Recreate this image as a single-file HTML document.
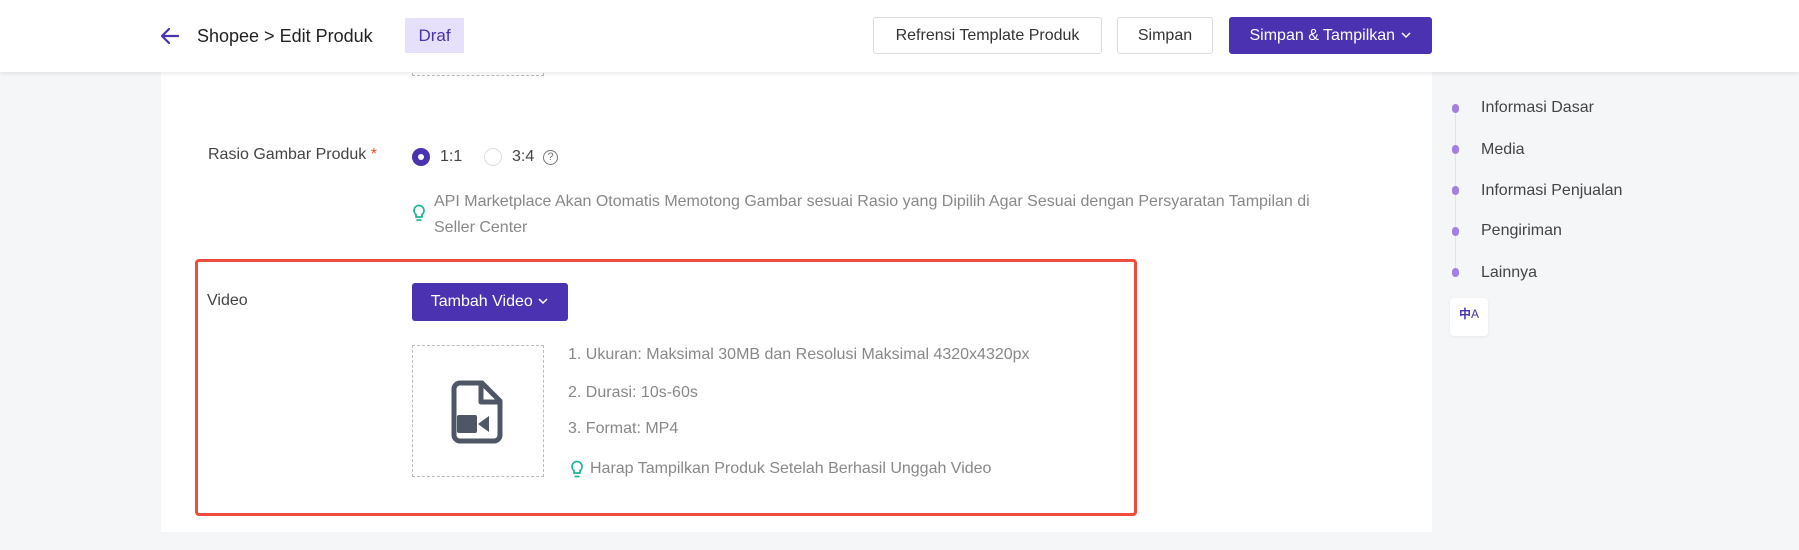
<!DOCTYPE html>
<html><head><meta charset="utf-8"><style>
*{margin:0;padding:0;box-sizing:border-box}
body{width:1799px;height:550px;overflow:hidden;background:#f5f6f8;font-family:"Liberation Sans","Noto Sans CJK SC",sans-serif;color:#333;position:relative}
.abs{position:absolute}
.hdr{left:0;top:0;width:1799px;height:72px;background:#fff;box-shadow:0 2px 4px rgba(0,0,0,.08);z-index:5}
.btn{position:absolute;top:17px;height:37px;border:1px solid #dcdde0;border-radius:3px;background:#fff;font-size:16px;line-height:35px;text-align:center;color:#333}
.card{left:161px;top:72px;width:1271px;height:460px;background:#fff}
.t{position:absolute;font-size:16px;white-space:nowrap;line-height:20px}
.g{color:#888}
.dot{position:absolute;left:1452px;width:7px;height:9px;border-radius:4px;background:#a47fe0}
.side{position:absolute;left:1481px;font-size:16px;color:#444;line-height:20px}
</style></head><body>
<div class="abs hdr">
  <svg class="abs" style="left:160px;top:27px" width="20" height="18" viewBox="0 0 20 18"><path d="M18 9H3M9 2L2 9l7 7" fill="none" stroke="#4a32b0" stroke-width="2.2" stroke-linecap="round" stroke-linejoin="round"/></svg>
  <div class="t" style="left:197px;top:26px;font-size:18px;color:#222">Shopee &gt; Edit Produk</div>
  <div class="abs" style="left:405px;top:18px;width:59px;height:35px;background:#e6e0fb;color:#4a32b0;font-size:17px;line-height:35px;text-align:center">Draf</div>
  <div class="btn" style="left:873px;width:229px">Refrensi Template Produk</div>
  <div class="btn" style="left:1117px;width:96px">Simpan</div>
  <div class="btn" style="left:1229px;width:203px;background:#4a32b0;border-color:#4a32b0;color:#fff">Simpan &amp; Tampilkan <svg width="12" height="8" viewBox="0 0 12 8" style="vertical-align:1px"><path d="M2 2l4 4 4-4" fill="none" stroke="#fff" stroke-width="1.5"/></svg></div>
</div>
<div class="abs card"></div>
<div class="abs" style="left:412px;top:60px;width:132px;height:16px;border:1px dashed #bbb;border-top:none"></div>
<div class="t" style="left:208px;top:145px;color:#444">Rasio Gambar Produk <span style="color:#ee4d2d">*</span></div>
<div class="abs" style="left:412px;top:148px;width:18px;height:18px;border-radius:50%;background:#4a32b0"></div>
<div class="abs" style="left:418px;top:154px;width:6px;height:6px;border-radius:50%;background:#fff"></div>
<div class="t" style="left:440px;top:147px;color:#444">1:1</div>
<div class="abs" style="left:484px;top:148px;width:18px;height:18px;border-radius:50%;border:1px solid #ddd"></div>
<div class="t" style="left:512px;top:147px;color:#444">3:4</div>
<div class="abs" style="left:543px;top:150px;width:15px;height:15px;border-radius:50%;border:1.3px solid #777;font-size:11px;line-height:13px;text-align:center;color:#777">?</div>
<svg class="abs" style="left:412px;top:204px" width="14" height="18" viewBox="0 0 14 18"><path d="M7 1.5a5 5 0 0 0-3 9v2.5h6v-2.5a5 5 0 0 0-3-9z" fill="none" stroke="#1bb394" stroke-width="1.7"/><path d="M4.5 16h5" stroke="#1bb394" stroke-width="1.7"/></svg>
<div class="t g" style="left:434px;top:192px">API Marketplace Akan Otomatis Memotong Gambar sesuai Rasio yang Dipilih Agar Sesuai dengan Persyaratan Tampilan di</div>
<div class="t g" style="left:434px;top:218px">Seller Center</div>
<div class="abs" style="left:195px;top:259px;width:942px;height:257px;border:3px solid #ee4d3d;border-radius:4px"></div>
<div class="t" style="left:207px;top:291px;color:#444">Video</div>
<div class="abs" style="left:412px;top:283px;width:156px;height:38px;background:#4a32b0;border-radius:3px;color:#fff;font-size:16px;line-height:38px;text-align:center">Tambah Video <svg width="12" height="8" viewBox="0 0 12 8" style="vertical-align:1px"><path d="M2 2l4 4 4-4" fill="none" stroke="#fff" stroke-width="1.5"/></svg></div>
<div class="abs" style="left:412px;top:345px;width:132px;height:132px;border:1px dashed #bbb"></div>
<svg class="abs" style="left:451px;top:380px" width="52" height="64" viewBox="0 0 52 64"><path d="M10 3h21l18 18v34a6 6 0 0 1-6 6H9a6 6 0 0 1-6-6V9a6 6 0 0 1 6-6z" fill="none" stroke="#4f5766" stroke-width="5" stroke-linejoin="round"/><path d="M30 3v19h19" fill="none" stroke="#4f5766" stroke-width="5" stroke-linejoin="round"/><rect x="6" y="35" width="20" height="18" rx="2" fill="#4f5766"/><path d="M27 44l11-8v16z" fill="#4f5766"/></svg>
<div class="t g" style="left:568px;top:345px">1. Ukuran: Maksimal 30MB dan Resolusi Maksimal 4320x4320px</div>
<div class="t g" style="left:568px;top:383px">2. Durasi: 10s-60s</div>
<div class="t g" style="left:568px;top:419px">3. Format: MP4</div>
<svg class="abs" style="left:570px;top:460px" width="14" height="19" viewBox="0 0 14 19"><path d="M7 1.5a5 5 0 0 0-3 9v2.5h6v-2.5a5 5 0 0 0-3-9z" fill="none" stroke="#1bb394" stroke-width="1.7"/><path d="M4.5 16.5h5" stroke="#1bb394" stroke-width="1.7"/></svg>
<div class="t g" style="left:590px;top:459px">Harap Tampilkan Produk Setelah Berhasil Unggah Video</div>
<div class="abs" style="left:1455px;top:108px;width:1px;height:166px;background:#e3e3e8"></div>
<div class="dot" style="top:104px"></div><div class="side" style="top:98px">Informasi Dasar</div>
<div class="dot" style="top:145px"></div><div class="side" style="top:140px">Media</div>
<div class="dot" style="top:186px"></div><div class="side" style="top:181px">Informasi Penjualan</div>
<div class="dot" style="top:227px"></div><div class="side" style="top:221px">Pengiriman</div>
<div class="dot" style="top:268px"></div><div class="side" style="top:263px">Lainnya</div>
<div class="abs" style="left:1450px;top:298px;width:38px;height:38px;background:#fff;border-radius:4px;box-shadow:0 1px 3px rgba(0,0,0,.06);color:#4a32b0;font-size:12px;line-height:12px;padding:10px 0 0 9px;font-weight:bold">中<span style="font-weight:normal">A</span></div>
</body></html>
